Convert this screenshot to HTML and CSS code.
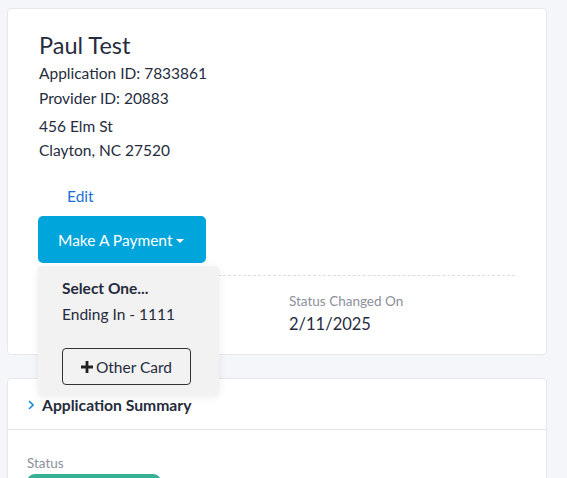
FILE: index.html
```html
<!DOCTYPE html>
<html>
<head>
<meta charset="utf-8">
<link rel="stylesheet" href="styles.css">
</head>
<body>
<div class="page">
  <section class="card profile">
    <h1 class="name">Paul Test</h1>
    <div class="ids">
      <div>Application ID: 7833861</div>
      <div>Provider ID: 20883</div>
    </div>
    <div class="address">
      <div>456 Elm St</div>
      <div>Clayton, NC 27520</div>
    </div>
    <a class="edit">Edit</a>
    <div class="pay-wrap">
      <button class="pay-btn">Make A Payment <span class="caret"></span></button>
      <div class="menu">
        <div class="menu-title">Select One...</div>
        <div class="menu-item">Ending In - 1111</div>
        <button class="other-btn"><svg class="plus" viewBox="0 0 12 12" width="12" height="12"><path d="M4.6 0h2.8v4.6H12v2.8H7.4V12H4.6V7.4H0V4.6h4.6z" fill="#222"/></svg>Other Card</button>
      </div>
    </div>
    <div class="divider"></div>
    <div class="facts">
      <div class="fact"></div>
      <div class="fact">
        <div class="label">Status Changed On</div>
        <div class="value">2/11/2025</div>
      </div>
    </div>
  </section>
  <section class="card summary">
    <div class="summary-head">
      <svg class="chev" viewBox="0 0 6 10" width="6" height="10"><path d="M1 1l4 4-4 4" fill="none" stroke="#1a8fd6" stroke-width="1.6"/></svg>
      <span>Application Summary</span>
    </div>
    <div class="summary-body">
      <div class="label">Status</div>
      <div class="badge"></div>
    </div>
  </section>
</div>
</body>
</html>
```
FILE: styles.css
```css
* { box-sizing: border-box; }
html, body { margin: 0; padding: 0; }
body {
  background: #f5f6fa;
  font-family: Lato, "Open Sans", sans-serif;
  color: #262c3d;
  width: 567px;
  height: 478px;
  overflow: hidden;
}
.page {
  padding: 8px 20px 0 7px;
  display: flex;
  flex-direction: column;
  gap: 23px;
}
.card {
  background: #fff;
  border: 1px solid #e6e8ee;
  border-radius: 4px;
}
.profile {
  padding: 21px 31px 22px 31px;
  height: 347px;
}
.name {
  margin: 0;
  font-size: 23.5px;
  font-weight: 400;
  line-height: 30px;
}
.ids {
  font-size: 15.5px;
  line-height: 25px;
  margin-top: 1px;
}
.address {
  font-size: 15.5px;
  line-height: 24px;
  margin-top: 3px;
}
.edit {
  display: block;
  color: #1a6fd6;
  font-size: 15.5px;
  line-height: 24px;
  margin-top: 22px;
  padding-left: 28px;
}
.pay-wrap {
  position: relative;
  margin-top: 8px;
  margin-left: -1px;
  height: 47px;
}
.pay-btn {
  height: 47px;
  padding: 0 22px 0 20px;
  background: #00a5db;
  color: #fff;
  border: none;
  border-radius: 5px;
  font-family: Lato, sans-serif;
  font-size: 15.5px;
  display: flex;
  align-items: center;
  gap: 4px;
}
.caret {
  display: inline-block;
  width: 0;
  height: 0;
  border-left: 4px solid transparent;
  border-right: 4px solid transparent;
  border-top: 4px solid #fff;
  margin-top: 2px;
}
.menu {
  position: absolute;
  top: 50px;
  left: 0;
  width: 181px;
  height: 129px;
  background: #f2f2f2;
  border-radius: 4px;
  box-shadow: 0 2px 8px rgba(0,0,0,0.08);
  padding: 12px 24px;
  z-index: 5;
}
.menu-title {
  font-weight: 700;
  font-size: 15.5px;
  line-height: 20px;
}
.menu-item {
  font-size: 15.5px;
  line-height: 20px;
  margin-top: 6px;
}
.other-btn {
  margin-top: 24px;
  width: 129px;
  height: 37px;
  border: 1px solid #333;
  border-radius: 4px;
  background: transparent;
  font-family: Lato, sans-serif;
  font-size: 15.5px;
  color: #262c3d;
  display: flex;
  align-items: center;
  justify-content: center;
  gap: 3px;
}
.divider {
  margin-top: 12px;
  border-top: 1px dashed #dcdde0;
}
.facts {
  display: grid;
  grid-template-columns: 1fr 1fr;
  margin-top: 16px;
}
.fact { padding: 0 12px; }
.label {
  font-size: 13.5px;
  color: #8b909a;
  line-height: 18px;
}
.value {
  font-size: 16.5px;
  line-height: 22px;
  margin-top: 3px;
}
.summary {
  height: 120px;
}
.summary-head {
  height: 51px;
  display: flex;
  align-items: center;
  gap: 8px;
  padding-left: 20px;
  padding-top: 2px;
  border-bottom: 1px solid #e4e5e8;
  font-weight: 700;
  font-size: 15.7px;
}
.summary-body {
  padding: 24px 20px 0 19px;
}
.badge {
  margin-top: 2px;
  width: 134px;
  height: 20px;
  background: #37b096;
  border-radius: 8px;
}
```
